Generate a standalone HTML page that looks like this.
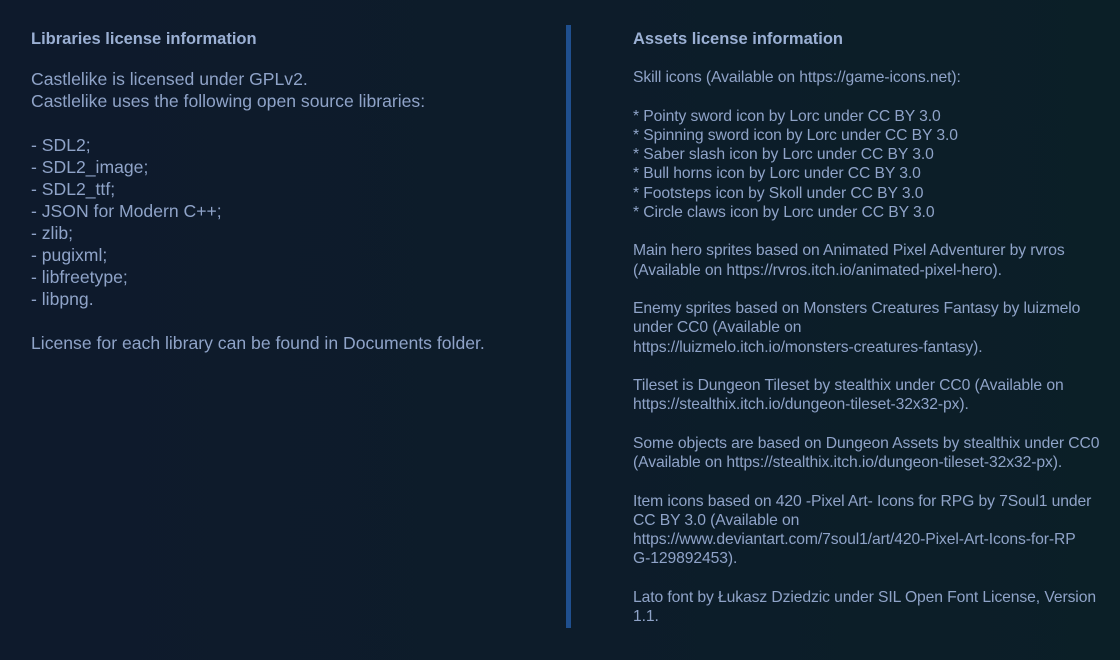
<!DOCTYPE html>
<html><head><meta charset="utf-8"><style>
html,body{margin:0;padding:0}
body{width:1120px;height:660px;overflow:hidden;background:linear-gradient(90deg,#0e1a2c 0%,#0d1c2a 50%,#0b1f27 100%);font-family:"Liberation Sans",sans-serif;color:#8fa3c8;position:relative}
.h{position:absolute;font-weight:bold;font-size:16.5px;color:#9bb0d4}
pre{font-family:"Liberation Sans",sans-serif}
.l{position:absolute;left:31px;top:68px;font-size:17.6px;line-height:22px;white-space:pre;margin:0}
.r{position:absolute;left:633px;top:68px;font-size:15.7px;line-height:19.25px;white-space:pre;margin:0;letter-spacing:-0.1px}
.div{position:absolute;left:566px;top:25px;width:5px;height:603px;background:#1f4f8e}
</style></head><body>
<div class="h" style="left:31px;top:30px">Libraries license information</div>
<div class="h" style="left:633px;top:30px">Assets license information</div>
<div class="div"></div>
<pre class="l">Castlelike is licensed under GPLv2.
Castlelike uses the following open source libraries:

- SDL2;
- SDL2_image;
- SDL2_ttf;
- JSON for Modern C++;
- zlib;
- pugixml;
- libfreetype;
- libpng.

License for each library can be found in Documents folder.</pre>
<pre class="r">Skill icons (Available on https://game-icons.net):

* Pointy sword icon by Lorc under CC BY 3.0
* Spinning sword icon by Lorc under CC BY 3.0
* Saber slash icon by Lorc under CC BY 3.0
* Bull horns icon by Lorc under CC BY 3.0
* Footsteps icon by Skoll under CC BY 3.0
* Circle claws icon by Lorc under CC BY 3.0

Main hero sprites based on Animated Pixel Adventurer by rvros
(Available on https://rvros.itch.io/animated-pixel-hero).

Enemy sprites based on Monsters Creatures Fantasy by luizmelo
under CC0 (Available on
https://luizmelo.itch.io/monsters-creatures-fantasy).

Tileset is Dungeon Tileset by stealthix under CC0 (Available on
https://stealthix.itch.io/dungeon-tileset-32x32-px).

Some objects are based on Dungeon Assets by stealthix under CC0
(Available on https://stealthix.itch.io/dungeon-tileset-32x32-px).

Item icons based on 420 -Pixel Art- Icons for RPG by 7Soul1 under
CC BY 3.0 (Available on
https://www.deviantart.com/7soul1/art/420-Pixel-Art-Icons-for-RP
G-129892453).

Lato font by Łukasz Dziedzic under SIL Open Font License, Version
1.1.</pre>
</body></html>
